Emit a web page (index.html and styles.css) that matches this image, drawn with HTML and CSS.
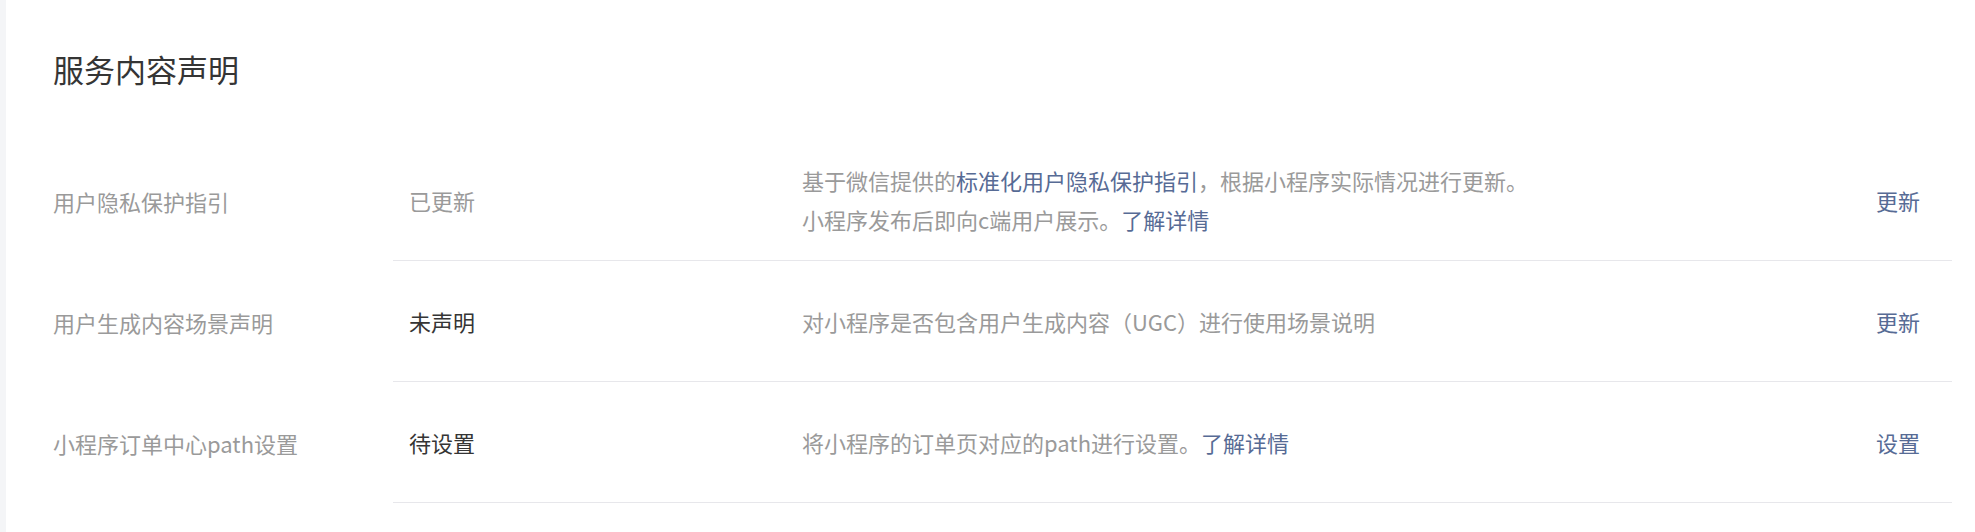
FILE: index.html
```html
<!DOCTYPE html>
<html lang="zh-CN">
<head>
<meta charset="utf-8">
<title>服务内容声明</title>
<link rel="stylesheet" href="styles.css">
</head>
<body>
<div class="card">
  <h2 class="title">服务内容声明</h2>
  <div class="list">
    <div class="row">
      <div class="label">用户隐私保护指引</div>
      <div class="content">
        <div class="status">已更新</div>
        <div class="desc">
          <div>基于微信提供的<a class="link">标准化用户隐私保护指引</a>，根据小程序实际情况进行更新。</div>
          <div>小程序发布后即向c端用户展示。<a class="link">了解详情</a></div>
        </div>
        <a class="action">更新</a>
      </div>
    </div>
    <div class="row">
      <div class="label">用户生成内容场景声明</div>
      <div class="content">
        <div class="status dark">未声明</div>
        <div class="desc">
          <div>对小程序是否包含用户生成内容（UGC）进行使用场景说明</div>
        </div>
        <a class="action">更新</a>
      </div>
    </div>
    <div class="row">
      <div class="label">小程序订单中心path设置</div>
      <div class="content">
        <div class="status dark">待设置</div>
        <div class="desc">
          <div>将小程序的订单页对应的path进行设置。<a class="link">了解详情</a></div>
        </div>
        <a class="action">设置</a>
      </div>
    </div>
  </div>
</div>
</body>
</html>
```
FILE: styles.css
```css
html, body {
  margin: 0;
  padding: 0;
}
body {
  background: #f4f5f7;
  font-family: "Noto Sans CJK SC", "Noto Sans", sans-serif;
  height: 532px;
  overflow: hidden;
}
.card {
  margin-left: 6px;
  background: #ffffff;
  height: 532px;
  padding: 47px 23px 0 47px;
  box-sizing: border-box;
}
.title {
  margin: 0;
  font-size: 31px;
  line-height: 44px;
  font-weight: 400;
  color: #353535;
}
.list {
  margin-top: 49px;
}
.row {
  display: flex;
}
.label {
  width: 340px;
  flex: none;
  display: flex;
  align-items: center;
  font-size: 22px;
  color: #9a9a9a;
}
.content {
  flex: 1;
  display: flex;
  align-items: center;
  height: 120px;
  border-bottom: 1px solid #e7e7eb;
  padding: 0 32px 0 16px;
  font-size: 22px;
}
.status {
  width: 393px;
  flex: none;
  color: #9a9a9a;
}
.status.dark {
  color: #353535;
}
.desc {
  flex: 1;
  color: #9a9a9a;
  line-height: 39px;
}
.link, .action {
  color: #576b95;
  text-decoration: none;
  cursor: pointer;
}
.action {
  flex: none;
}
```
